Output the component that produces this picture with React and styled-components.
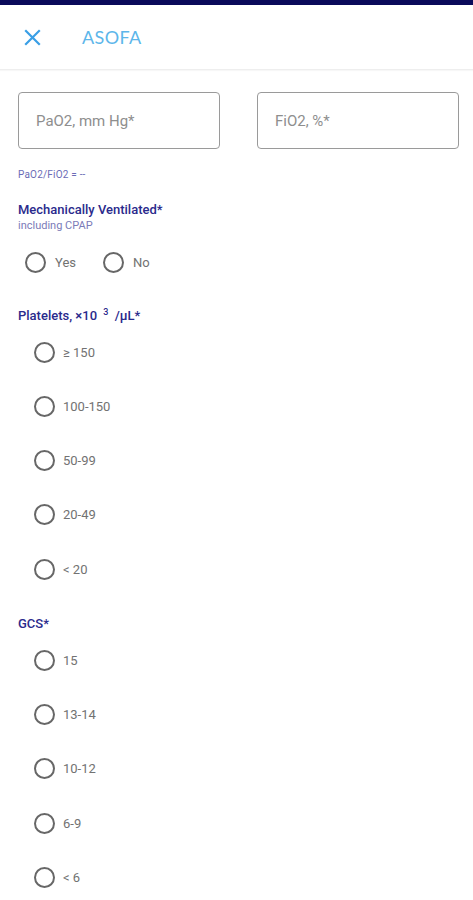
import React from "react";
import styled, { createGlobalStyle } from "styled-components";

const Global = createGlobalStyle`
  html, body { margin: 0; padding: 0; background: #ffffff; }
  body { font-family: Roboto, "Noto Sans", Arial, sans-serif; }
  * { box-sizing: border-box; }
`;

const Page = styled.div`
  width: 473px;
  min-height: 900px;
  background: #fff;
`;

const TopStrip = styled.div`
  height: 5px;
  background: #0a0a5a;
`;

const Header = styled.header`
  height: 65px;
  display: flex;
  align-items: center;
  padding-left: 22px;
  border-bottom: 1px solid #eeeeee;
  box-shadow: 0 1px 1px rgba(0,0,0,0.03);
`;

const CloseButton = styled.button`
  width: 20px;
  height: 20px;
  padding: 0;
  border: 0;
  background: none;
  display: flex;
  align-items: center;
  justify-content: center;
`;

const Title = styled.h1`
  margin: 0 0 0 40px;
  font-family: Lato, "Open Sans", sans-serif;
  font-weight: 400;
  font-size: 18px;
  letter-spacing: 0.4px;
  color: #5cb6ea;
`;

const Content = styled.main`
  padding: 22px 14px 0 18px;
`;

const InputRow = styled.div`
  display: grid;
  grid-template-columns: 1fr 1fr;
  column-gap: 37px;
`;

const Field = styled.div`
  height: 57px;
  border: 1px solid #9a9a9a;
  border-radius: 4px;
  display: flex;
  align-items: center;
  padding-left: 17px;
  font-size: 15px;
  color: #8e8e8e;
`;

const Ratio = styled.div`
  margin-top: 19px;
  height: 14px;
  line-height: 14px;
  font-size: 10px;
  letter-spacing: 0.2px;
  color: #6b6bb6;
`;

const Label = styled.div`
  margin-top: ${(p) => p.$mt}px;
  height: 16px;
  line-height: 16px;
  font-size: 13px;
  font-weight: 500;
  color: #2a2a8c;
  sup {
    font-size: 9px;
    vertical-align: 5px;
    line-height: 0;
    margin: 0 3px;
  }
`;

const Hint = styled.div`
  margin-top: 2px;
  height: 12px;
  line-height: 12px;
  font-size: 11px;
  color: #7b7bb8;
`;

const InlineChoices = styled.div`
  margin-top: 10px;
  height: 40px;
  display: flex;
  align-items: center;
  padding-left: 7px;
  gap: 27px;
`;

const Choice = styled.label`
  display: flex;
  align-items: center;
  gap: ${(p) => p.$gap}px;
  font-size: 13px;
  color: #727272;
`;

const Circle = styled.span`
  width: 21px;
  height: 21px;
  border: 2px solid #676767;
  border-radius: 50%;
  flex: none;
`;

const OptionList = styled.div`
  margin-top: 1px;
  padding-left: 16px;
`;

const OptionRow = styled.div`
  height: 54.25px;
  display: flex;
  align-items: center;
`;

const platelets = ["≥ 150", "100-150", "50-99", "20-49", "< 20"];
const gcs = ["15", "13-14", "10-12", "6-9", "< 6"];

function Options({ items }) {
  return (
    <OptionList>
      {items.map((t) => (
        <OptionRow key={t}>
          <Choice $gap={8}>
            <Circle />
            {t}
          </Choice>
        </OptionRow>
      ))}
    </OptionList>
  );
}

export default function App() {
  return (
    <Page>
      <Global />
      <TopStrip />
      <Header>
        <CloseButton aria-label="close">
          <svg width="17" height="17" viewBox="0 0 17 17">
            <path d="M2 2 L15 15 M15 2 L2 15" stroke="#3a9fe6" strokeWidth="2.2" strokeLinecap="square" />
          </svg>
        </CloseButton>
        <Title>ASOFA</Title>
      </Header>
      <Content>
        <InputRow>
          <Field>PaO2, mm Hg*</Field>
          <Field>FiO2, %*</Field>
        </InputRow>
        <Ratio>PaO2/FiO2 = --</Ratio>
        <Label $mt={20}>Mechanically Ventilated*</Label>
        <Hint>including CPAP</Hint>
        <InlineChoices>
          <Choice $gap={9}>
            <Circle />
            Yes
          </Choice>
          <Choice $gap={9}>
            <Circle />
            No
          </Choice>
        </InlineChoices>
        <Label $mt={26}>
          Platelets, ×10 <sup>3</sup> /µL*
        </Label>
        <Options items={platelets} />
        <Label $mt={20}>GCS*</Label>
        <Options items={gcs} />
      </Content>
    </Page>
  );
}
